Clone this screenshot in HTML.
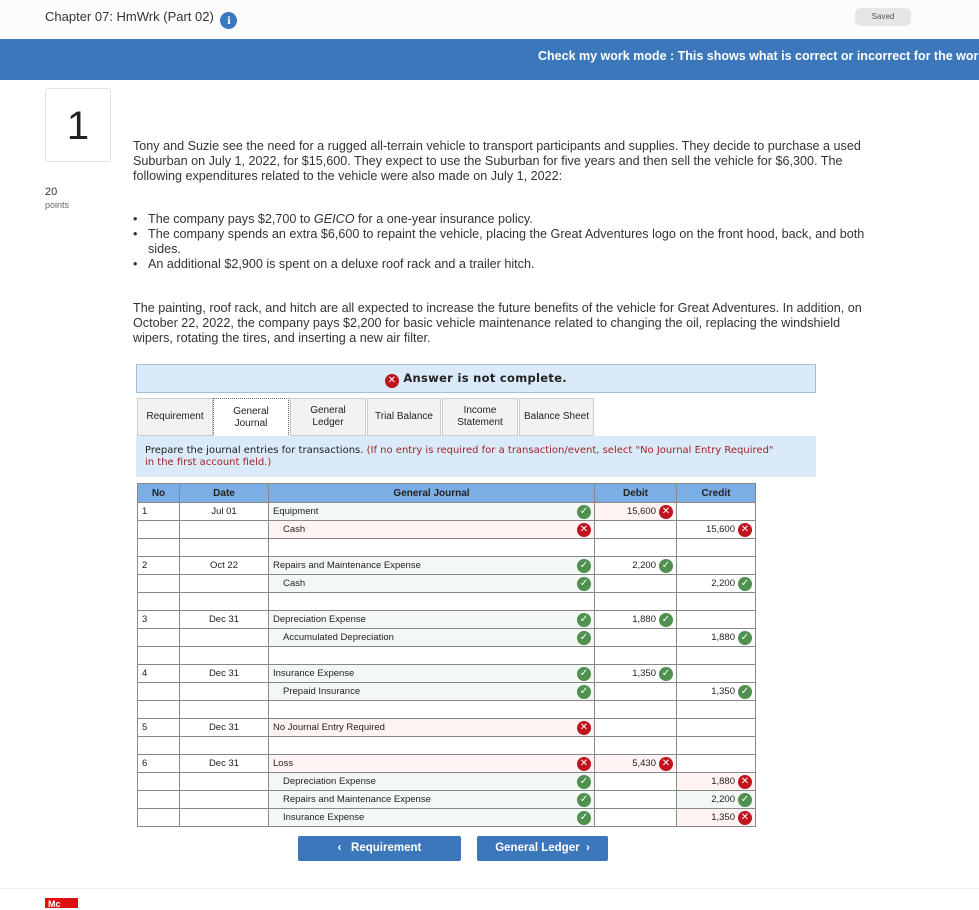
<!DOCTYPE html>
<html><head><meta charset="utf-8"><style>
*{box-sizing:border-box;margin:0;padding:0}
body{width:979px;height:908px;overflow:hidden;background:#fff;font-family:"Liberation Sans",sans-serif;color:#222;position:relative}
.abs{position:absolute}
.top{left:0;top:0;width:979px;height:38px;background:#fcfcfc}
.title{left:45px;top:9px;font-size:13px;color:#333}
.info{display:inline-block;width:17px;height:17px;border-radius:50%;background:#3a78c0;color:#fff;font-weight:bold;font-size:12px;text-align:center;line-height:17px;vertical-align:-3px;margin-left:3px;font-family:"Liberation Serif",serif}
.saved{left:855px;top:8px;width:56px;height:18px;border-radius:6px;background:#e6e6e9;font-size:8px;text-align:center;line-height:18px;color:#555}
.band{left:0;top:39px;width:979px;height:41px;background:#3c77bb;color:#fff;font-weight:bold;font-size:12.5px;line-height:34px;padding-left:538px;white-space:nowrap;overflow:hidden}
.qnum{left:45px;top:88px;width:66px;height:74px;border:1px solid #e2e2e2;border-radius:3px;font-size:40px;text-align:center;line-height:74px}
.pts{left:45px;top:186px;font-size:11px;color:#333}
.pts small{display:block;font-size:9px;color:#666;margin-top:2px}
.txt{left:133px;font-size:12.6px;line-height:15px;color:#333;width:740px}
ul.txt{list-style:none}
ul.txt li{position:relative;padding-left:15px}
ul.txt li:before{content:"•";position:absolute;left:0}
.banner{left:136px;top:364px;width:680px;height:29px;background:#daeaf8;border:1px solid #9ec0e0;text-align:center;font-size:11.5px;font-weight:bold;line-height:27px;font-family:"DejaVu Sans",sans-serif;letter-spacing:.3px}
.tab{top:398px;height:38px;background:#f2f2f2;border:1px solid #ccc;font-size:10px;text-align:center;display:flex;align-items:center;justify-content:center;line-height:12px}
.tab.act{background:#fff;border:1px dotted #666;border-bottom:none;height:39px}
.instr{left:136px;top:436px;width:680px;height:41px;background:#daeaf8;font-size:10px;padding:9px 0 0 9px;line-height:12px;font-family:"DejaVu Sans",sans-serif}
.instr span{color:#a0242a}
table{position:absolute;left:137px;top:483px;border-collapse:collapse;font-size:9.5px}
td,th{border:1px solid #888;height:18px;padding:0 4px;position:relative}
th{background:#7aaee4;font-weight:bold;font-size:10px;height:19px}
.g{background:#f4f8f4}.p{background:#fff3f3}
.r{text-align:right;padding-right:20px}
.i1{padding-left:14px}
.ic{position:absolute;right:3px;top:2px;width:14px;height:14px;border-radius:50%;color:#fff;font-size:10px;font-weight:bold;text-align:center;line-height:14px;font-family:"DejaVu Sans",sans-serif}
.ok{background:#4f914f}.no{background:#c0141e}
.btn{top:836px;height:25px;background:#3c77bb;color:#fff;font-weight:bold;font-size:11.5px;text-align:center;line-height:25px;border-radius:2px}
.foot{left:0;top:888px;width:979px;height:1px;background:#eee}
.mc{left:45px;top:898px;width:33px;height:10px;background:#d11;color:#fff;font-size:9px;font-weight:bold;padding-left:3px;line-height:12px}
</style></head><body>
<div class="abs top"></div>
<div class="abs title">Chapter 07: HmWrk (Part 02) <span class="info">i</span></div>
<div class="abs saved">Saved</div>
<div class="abs band">Check my work mode : This shows what is correct or incorrect for the work you have completed so far.</div>
<div class="abs qnum">1</div>
<div class="abs pts">20<small>points</small></div>
<div class="abs txt" style="top:139px">Tony and Suzie see the need for a rugged all-terrain vehicle to transport participants and supplies. They decide to purchase a used Suburban on July 1, 2022, for $15,600. They expect to use the Suburban for five years and then sell the vehicle for $6,300. The following expenditures related to the vehicle were also made on July 1, 2022:</div>
<ul class="abs txt" style="top:212px;left:133px">
<li>The company pays $2,700 to <i>GEICO</i> for a one-year insurance policy.</li>
<li>The company spends an extra $6,600 to repaint the vehicle, placing the Great Adventures logo on the front hood, back, and both sides.</li>
<li>An additional $2,900 is spent on a deluxe roof rack and a trailer hitch.</li>
</ul>
<div class="abs txt" style="top:301px">The painting, roof rack, and hitch are all expected to increase the future benefits of the vehicle for Great Adventures. In addition, on October 22, 2022, the company pays $2,200 for basic vehicle maintenance related to changing the oil, replacing the windshield wipers, rotating the tires, and inserting a new air filter.</div>
<div class="abs banner"><span class="ic no" style="position:relative;display:inline-block;right:auto;top:1px;vertical-align:0">✕</span> Answer is not complete.</div>
<div class="abs tab" style="left:137px;width:76px">Requirement</div>
<div class="abs tab act" style="left:213px;width:76px">General<br>Journal</div>
<div class="abs tab" style="left:290px;width:76px">General<br>Ledger</div>
<div class="abs tab" style="left:367px;width:74px">Trial Balance</div>
<div class="abs tab" style="left:442px;width:76px">Income<br>Statement</div>
<div class="abs tab" style="left:519px;width:75px">Balance Sheet</div>
<div class="abs instr">Prepare the journal entries for transactions. <span>(If no entry is required for a transaction/event, select "No Journal Entry Required"<br>in the first account field.)</span></div>
<table>
<colgroup><col style="width:42px"><col style="width:89px"><col style="width:326px"><col style="width:82px"><col style="width:79px"></colgroup>
<tr><th>No</th><th>Date</th><th>General Journal</th><th>Debit</th><th>Credit</th></tr>
<tr><td>1</td><td style="text-align:center">Jul 01</td><td class="g">Equipment<span class="ic ok">✓</span></td><td class="p r">15,600<span class="ic no">✕</span></td><td></td></tr>
<tr><td></td><td></td><td class="p i1">Cash<span class="ic no">✕</span></td><td></td><td class="r">15,600<span class="ic no">✕</span></td></tr>
<tr><td></td><td></td><td></td><td></td><td></td></tr>
<tr><td>2</td><td style="text-align:center">Oct 22</td><td class="g">Repairs and Maintenance Expense<span class="ic ok">✓</span></td><td class="r">2,200<span class="ic ok">✓</span></td><td></td></tr>
<tr><td></td><td></td><td class="g i1">Cash<span class="ic ok">✓</span></td><td></td><td class="r">2,200<span class="ic ok">✓</span></td></tr>
<tr><td></td><td></td><td></td><td></td><td></td></tr>
<tr><td>3</td><td style="text-align:center">Dec 31</td><td class="g">Depreciation Expense<span class="ic ok">✓</span></td><td class="r">1,880<span class="ic ok">✓</span></td><td></td></tr>
<tr><td></td><td></td><td class="g i1">Accumulated Depreciation<span class="ic ok">✓</span></td><td></td><td class="r">1,880<span class="ic ok">✓</span></td></tr>
<tr><td></td><td></td><td></td><td></td><td></td></tr>
<tr><td>4</td><td style="text-align:center">Dec 31</td><td class="g">Insurance Expense<span class="ic ok">✓</span></td><td class="r">1,350<span class="ic ok">✓</span></td><td></td></tr>
<tr><td></td><td></td><td class="g i1">Prepaid Insurance<span class="ic ok">✓</span></td><td></td><td class="r">1,350<span class="ic ok">✓</span></td></tr>
<tr><td></td><td></td><td></td><td></td><td></td></tr>
<tr><td>5</td><td style="text-align:center">Dec 31</td><td class="p">No Journal Entry Required<span class="ic no">✕</span></td><td></td><td></td></tr>
<tr><td></td><td></td><td></td><td></td><td></td></tr>
<tr><td>6</td><td style="text-align:center">Dec 31</td><td class="p">Loss<span class="ic no">✕</span></td><td class="p r">5,430<span class="ic no">✕</span></td><td></td></tr>
<tr><td></td><td></td><td class="g i1">Depreciation Expense<span class="ic ok">✓</span></td><td></td><td class="p r">1,880<span class="ic no">✕</span></td></tr>
<tr><td></td><td></td><td class="g i1">Repairs and Maintenance Expense<span class="ic ok">✓</span></td><td></td><td class="g r">2,200<span class="ic ok">✓</span></td></tr>
<tr><td></td><td></td><td class="g i1">Insurance Expense<span class="ic ok">✓</span></td><td></td><td class="p r">1,350<span class="ic no">✕</span></td></tr>
</table>
<div class="abs btn" style="left:298px;width:163px">‹&nbsp;&nbsp; Requirement</div>
<div class="abs btn" style="left:477px;width:131px">General Ledger &nbsp;›</div>
<div class="abs foot"></div>
<div class="abs mc">Mc</div>
</body></html>
